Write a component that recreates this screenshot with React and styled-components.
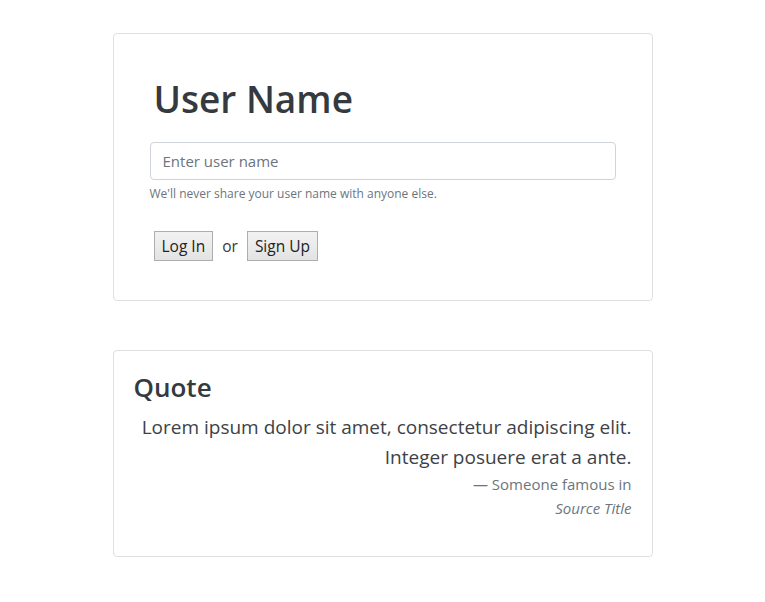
import React from "react";
import styled, { createGlobalStyle } from "styled-components";

const GlobalStyle = createGlobalStyle`
  body {
    margin: 0;
    background: #fff;
    font-family: "Open Sans", "Noto Sans", sans-serif;
    color: #343a40;
  }
`;

const Page = styled.div`
  width: 540px;
  margin: 0 auto;
  padding-top: 33px;
  display: flex;
  flex-direction: column;
  gap: 49px;
`;

const Card = styled.div`
  border: 1px solid #dfdfdf;
  border-radius: 4px;
  padding: ${({ $pad }) => $pad};
  background: #fff;
`;

const Title = styled.h1`
  margin: 0 0 19px 4px;
  font-size: 37px;
  font-weight: 600;
  line-height: 48px;
  color: #343a40;
`;

const Input = styled.input`
  display: block;
  box-sizing: border-box;
  width: 100%;
  height: 38px;
  padding: 6px 12px;
  border: 1px solid #ced4da;
  border-radius: 4px;
  font-family: inherit;
  font-size: 15px;
  color: #495057;
  &::placeholder {
    color: #6c757d;
  }
`;

const Help = styled.small`
  display: block;
  margin-top: 4px;
  font-size: 12px;
  line-height: 19px;
  color: #6c757d;
`;

const Actions = styled.div`
  display: flex;
  align-items: center;
  gap: 9px;
  margin: 28px 0 0 4px;
  font-size: 15.5px;
  color: #343a40;
`;

const Button = styled.button`
  height: 30px;
  padding: 0 7px;
  border: 1px solid #adadad;
  border-radius: 0;
  background: linear-gradient(#f2f2f2, #e3e3e3);
  font-family: inherit;
  font-size: 15.5px;
  color: #222;
`;

const Or = styled.span`
  color: #343a40;
`;

const QuoteTitle = styled.h3`
  margin: 0 0 8px;
  font-size: 26px;
  font-weight: 600;
  line-height: 34px;
  color: #343a40;
`;

const Blockquote = styled.blockquote`
  margin: 0;
  text-align: right;
  font-size: 19px;
  line-height: 30px;
  color: #3d4247;
`;

const Footer = styled.footer`
  font-size: 15px;
  line-height: 24px;
  color: #6c757d;
  cite {
    font-style: italic;
  }
`;

export default function App() {
  return (
    <>
      <GlobalStyle />
      <Page>
        <Card $pad="41px 36px 39px">
          <Title>User Name</Title>
          <Input placeholder="Enter user name" />
          <Help>We'll never share your user name with anyone else.</Help>
          <Actions>
            <Button>Log In</Button>
            <Or>or</Or>
            <Button>Sign Up</Button>
          </Actions>
        </Card>
        <Card $pad="19px 20px 36px">
          <QuoteTitle>Quote</QuoteTitle>
          <Blockquote>
            Lorem ipsum dolor sit amet, consectetur adipiscing elit.
            <br />
            Integer posuere erat a ante.
            <Footer>
              — Someone famous in
              <br />
              <cite>Source Title</cite>
            </Footer>
          </Blockquote>
        </Card>
      </Page>
    </>
  );
}
